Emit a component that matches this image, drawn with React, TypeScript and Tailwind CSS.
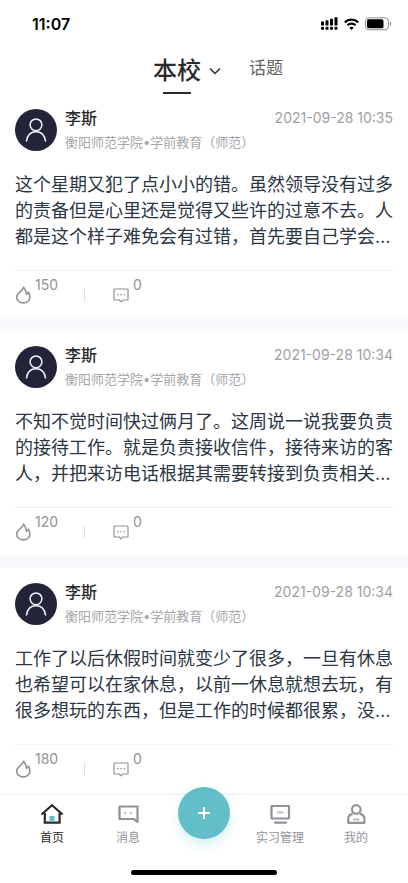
import { useState } from 'react';

interface Post {
    id: number;
    author: string;
    school: string;
    date: string;
    content: string;
    likes: number;
    comments: number;
}

const posts: Post[] = [
    {
        id: 1,
        author: '李斯',
        school: '衡阳师范学院•学前教育（师范）',
        date: '2021-09-28 10:35',
        content: '这个星期又犯了点小小的错。虽然领导没有过多的责备但是心里还是觉得又些许的过意不去。人都是这个样子难免会有过错，首先要自己学会…',
        likes: 150,
        comments: 0
    },
    {
        id: 2,
        author: '李斯',
        school: '衡阳师范学院•学前教育（师范）',
        date: '2021-09-28 10:34',
        content: '不知不觉时间快过俩月了。这周说一说我要负责的接待工作。就是负责接收信件，接待来访的客人，并把来访电话根据其需要转接到负责相关…',
        likes: 120,
        comments: 0
    },
    {
        id: 3,
        author: '李斯',
        school: '衡阳师范学院•学前教育（师范）',
        date: '2021-09-28 10:34',
        content: '工作了以后休假时间就变少了很多，一旦有休息也希望可以在家休息，以前一休息就想去玩，有很多想玩的东西，但是工作的时候都很累，没…',
        likes: 180,
        comments: 0
    }
];

function StatusBar() {
    return (
        <div className="flex h-12 items-center justify-between pl-8 pr-4">
            <span className="text-base font-semibold text-black">11:07</span>
            <div className="flex items-center gap-1.5">
                <svg width="17" height="14" viewBox="0 0 17 14" fill="#000">
                    <rect x="0" y="4.5" width="3" height="4" rx="0.6" />
                    <rect x="4.5" y="3.2" width="3" height="5.3" rx="0.6" />
                    <rect x="9" y="1.8" width="3" height="6.7" rx="0.6" />
                    <rect x="13.5" y="0.2" width="3" height="8.3" rx="0.6" />
                    <rect x="0" y="9.8" width="3" height="3" rx="0.9" />
                    <rect x="4.5" y="9.8" width="3" height="3" rx="0.9" />
                    <rect x="9" y="9.8" width="3" height="3" rx="0.9" />
                    <rect x="13.5" y="9.8" width="3" height="3" rx="0.9" />
                </svg>
                <svg width="15" height="12" viewBox="0 0 15 12" fill="none" stroke="#000" strokeWidth="2.2">
                    <path d="M0.8 4.4a9.6 9.6 0 0 1 13.4 0" />
                    <path d="M3.4 7.3a5.9 5.9 0 0 1 8.2 0" />
                    <path d="M7.5 12 5.3 9.8a3.2 3.2 0 0 1 4.4 0z" fill="#000" stroke="none" />
                </svg>
                <svg width="27" height="14" viewBox="0 0 27 14" fill="none">
                    <rect x="0.5" y="0.8" width="23" height="12" rx="3.4" stroke="#8e8e8e" />
                    <rect x="2" y="2.3" width="16.5" height="9" rx="1.8" fill="#000" />
                    <path d="M25 4.8c1.6.7 1.6 3.3 0 4z" fill="#777" />
                </svg>
            </div>
        </div>
    );
}

function FlameIcon() {
    return (
        <svg width="16" height="18" viewBox="0 0 16 18" fill="none" stroke="#929298" strokeWidth="1.6" strokeLinejoin="round" strokeLinecap="round">
            <path d="M8.6 1.2C7.8 4 5.6 5.2 3.900 6.900 2.500 8.200 1.700 9.400 1.700 11c0 3.400 2.900 5.900 6.600 5.900s6.600-2.500 6.600-5.900c0-1.900-.5-3.400-1.500-4.800-.3 1.100-.9 1.700-1.900 1.900C11.100 5.400 10.300 2.900 8.600 1.200z" />
        </svg>
    );
}

function CommentIcon() {
    return (
        <svg width="16" height="15" viewBox="0 0 16 15" fill="none" stroke="#929298" strokeWidth="1.2" strokeLinejoin="round">
            <path d="M1.6 1h12.8q.6 0 .6.6v9.8q0 .6-.6.6H9.8L8 13.9 6.2 12H1.6q-.6 0-.6-.6V1.6Q1 1 1.6 1z" />
            <path d="M4 6.6h1.4M7.3 6.6h1.4M10.6 6.6H12" strokeWidth="1.4" />
        </svg>
    );
}

function PostCard({ post }: { post: Post }) {
    return (
        <article className="bg-white px-[15px] pt-[15px]">
            <div className="flex gap-2">
                <div className="flex size-[42px] shrink-0 items-center justify-center rounded-full bg-[#23233a]">
                    <svg width="22" height="24" viewBox="0 0 22 24" fill="none" stroke="#f4f4f8" strokeWidth="1.5" strokeLinecap="round">
                        <circle cx="11" cy="6.8" r="5.9" />
                        <path d="M1.5 23C2.3 17.2 6 13.7 11 13.7s8.7 3.5 9.5 9.3" />
                    </svg>
                </div>
                <div className="min-w-0 flex-1">
                    <div className="flex items-center justify-between">
                        <h2 className="text-base leading-[18px] font-medium text-[#2a2a2a]">{post.author}</h2>
                        <time className="text-sm leading-[18px] text-[#a0a0a4]">{post.date}</time>
                    </div>
                    <p className="mt-1.5 text-[13px] leading-[18px] text-[#a5a6aa]">{post.school}</p>
                </div>
            </div>
            <p className="mt-[21px] line-clamp-3 text-lg leading-[26px] text-[#2b3644]">{post.content}</p>
            <div className="mt-5 flex h-[49px] items-center border-t border-[#f2f2f3] text-[#929298]">
                <button aria-label="点赞" className="flex h-9 w-[69px] items-center gap-1">
                    <FlameIcon />
                    <span className="self-start text-sm leading-4">{post.likes}</span>
                </button>
                <span className="h-3 w-px bg-[#dddde0]" />
                <button aria-label="评论" className="ml-7 flex h-9 items-center gap-1">
                    <CommentIcon />
                    <span className="self-start text-sm leading-4">{post.comments}</span>
                </button>
            </div>
        </article>
    );
}

function TabBar() {
    const [active, setActive] = useState('home');
    const itemClass = 'flex flex-1 flex-col items-center gap-1 pt-2 text-xs leading-[18px] whitespace-nowrap';
    const color = (key: string) => (active === key ? 'text-[#2a2a2a]' : 'text-[#929298]');

    return (
        <nav className="sticky bottom-0 border-t border-[#f2f2f4] bg-white pb-2">
            <div className="flex h-[75px] items-start px-3.5">
                <button onClick={() => setActive('home')} className={`${itemClass} ${color('home')}`}>
                    <svg width="24" height="22" viewBox="0 0 24 22" fill="none" stroke="currentColor" strokeWidth="2.2">
                        <path d="M4.8 10v9.7h14.8V10" />
                        <path d="M1.5 11.5 12 2.2l10.5 9.3" />
                        <path d="M9.6 13h4.8v5.7H9.6z" fill="#62bec8" stroke="none" />
                    </svg>
                    <span>首页</span>
                </button>
                <button onClick={() => setActive('message')} className={`${itemClass} ${color('message')}`}>
                    <svg width="24" height="22" viewBox="0 0 24 22" fill="none" stroke="currentColor" strokeWidth="2.2" strokeLinejoin="round">
                        <path d="M3.5 3.5h18v15.3L17.7 16H3.5z" />
                        <path d="M8.2 9.8h2M13.7 9.8h2" stroke="#c5c5ca" />
                    </svg>
                    <span>消息</span>
                </button>
                <div className="flex flex-1 justify-center">
                    <button
                        aria-label="发布"
                        className="-mt-2 flex size-[52px] shrink-0 items-center justify-center rounded-full bg-[#62bec8] shadow-[0_6px_12px_rgba(98,200,215,0.25)]"
                    >
                        <svg width="14" height="14" viewBox="0 0 14 14" stroke="#fff" strokeWidth="2">
                            <path d="M7 1v12M1 7h12" />
                        </svg>
                    </button>
                </div>
                <button onClick={() => setActive('manage')} className={`${itemClass} ${color('manage')}`}>
                    <svg width="24" height="22" viewBox="0 0 24 22" fill="none" stroke="currentColor" strokeWidth="2.2" strokeLinejoin="round">
                        <rect x="3.5" y="3" width="17.5" height="12.5" />
                        <path d="M9 9.5h6.5" stroke="#c5c5ca" />
                        <path d="M7 19.6h11" strokeLinecap="round" />
                    </svg>
                    <span>实习管理</span>
                </button>
                <button onClick={() => setActive('mine')} className={`${itemClass} ${color('mine')}`}>
                    <svg width="24" height="22" viewBox="0 0 24 22" fill="none" stroke="currentColor" strokeWidth="2.2" strokeLinejoin="round">
                        <circle cx="12.3" cy="6.5" r="4.3" />
                        <path d="M8.800 10.800C5.500 11.500 4.200 13.500 4.200 16v3.800h16.200V16c0-2.500-1.300-4.500-4.600-5.200" />
                        <path d="M9 16.500h6.5" stroke="#c5c5ca" />
                    </svg>
                    <span>我的</span>
                </button>
            </div>
            <div className="mx-auto h-[5px] w-[146px] rounded-full bg-black" />
        </nav>
    );
}

export default function App() {
    return (
        <div className="flex min-h-screen flex-col bg-[#f8f9fc] font-[Inter,'Noto_Sans_CJK_SC',sans-serif]">
            <header className="bg-white">
                <StatusBar />
                <div className="flex h-[46px] items-start justify-center gap-7 pl-7">
                    <button className="flex items-center gap-2 text-[#2a2a2a]">
                        <span className="relative text-2xl leading-[46px] font-medium">
                            本校
                            <span className="absolute bottom-0 left-1/2 h-0.5 w-7 -translate-x-1/2 bg-[#2a2a2a]" />
                        </span>
                        <svg width="12" height="8" viewBox="0 0 12 8" fill="none" stroke="currentColor" strokeWidth="1.5">
                            <path d="M1 1.5 6 6.5l5-5" />
                        </svg>
                    </button>
                    <button className="text-[17px] leading-10 text-[#666]">话题</button>
                </div>
            </header>

            <main className="flex flex-1 flex-col gap-3">
                {posts.map((post) => (
                    <PostCard key={post.id} post={post} />
                ))}
            </main>

            <TabBar />
        </div>
    );
}
